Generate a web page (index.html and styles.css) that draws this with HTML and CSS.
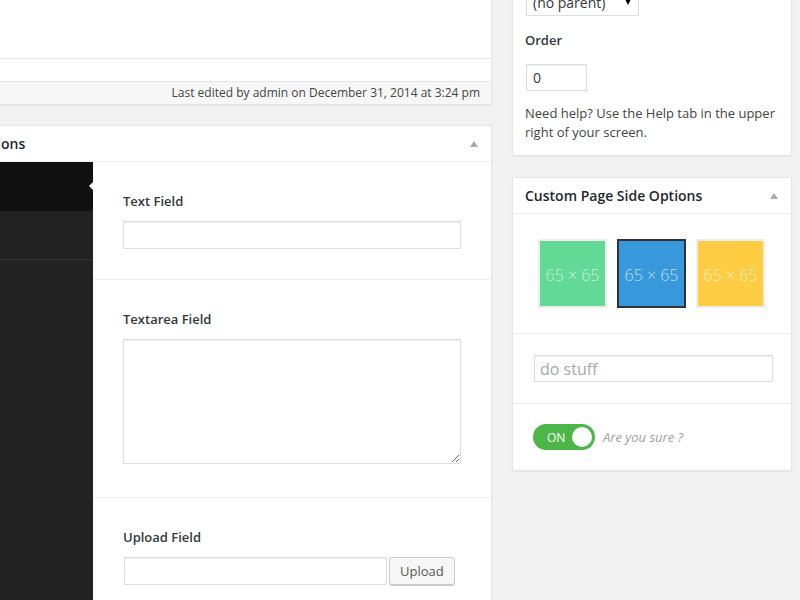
FILE: index.html
```html
<!DOCTYPE html>
<html lang="en">
<head>
<meta charset="utf-8">
<title>Edit Page</title>
<link rel="stylesheet" href="styles.css">
</head>
<body>
<div class="page">
  <div class="main">
    <div class="box editor">
      <div class="editor-area"></div>
      <div class="editor-strip"></div>
      <div class="status">Last edited by admin on December 31, 2014 at 3:24 pm</div>
    </div>

    <div class="box postbox">
      <div class="hndle">
        <span>Custom Page Options</span>
        <span class="toggle-arrow"></span>
      </div>
      <div class="opts">
        <div class="nav">
          <div class="nav-item active">General</div>
          <div class="nav-item">Media</div>
        </div>
        <div class="content">
          <div class="field">
            <label class="label">Text Field</label>
            <input class="input" type="text">
          </div>
          <div class="field field-textarea">
            <label class="label">Textarea Field</label>
            <textarea class="input textarea"></textarea>
          </div>
          <div class="field">
            <label class="label">Upload Field</label>
            <div class="upload-row">
              <input class="input upload-input" type="text">
              <button class="button" type="button">Upload</button>
            </div>
          </div>
        </div>
      </div>
    </div>
  </div>

  <div class="side">
    <div class="box attrs">
      <div class="select"><span>(no parent)</span><span class="select-arrow"></span></div>
      <p class="attr-label">Order</p>
      <input class="input order" type="text" value="0">
      <p class="help">Need help? Use the Help tab in the upper right of your screen.</p>
    </div>

    <div class="box sidebox">
      <div class="hndle">
        <span>Custom Page Side Options</span>
        <span class="toggle-arrow"></span>
      </div>
      <div class="side-section images">
        <div class="img-opt"><div class="img green">65 × 65</div></div>
        <div class="img-opt selected"><div class="img blue">65 × 65</div></div>
        <div class="img-opt"><div class="img yellow">65 × 65</div></div>
      </div>
      <div class="side-section text-sec">
        <input class="input stuff" type="text" placeholder="do stuff">
      </div>
      <div class="side-section switch-sec">
        <div class="switch"><span class="switch-label">ON</span><span class="knob"></span></div>
        <span class="sure">Are you sure ?</span>
      </div>
    </div>
  </div>
</div>
</body>
</html>
```

FILE: styles.css
```css
html, body {
  margin: 0;
  padding: 0;
}
body {
  background: #f1f1f1;
  font-family: "Open Sans", "Liberation Sans", sans-serif;
  font-size: 13px;
  color: #444;
  overflow: hidden;
  height: 600px;
}
.page {
  display: flex;
  align-items: flex-start;
}
.main {
  flex: none;
  width: 625px;
  margin-left: -133px;
}
.side {
  flex: none;
  width: 280px;
  margin-left: 20px;
  margin-top: -24px;
}
.box {
  background: #fff;
  border: 1px solid #e5e5e5;
  box-shadow: 0 1px 1px rgba(0, 0, 0, 0.04);
  box-sizing: border-box;
}

/* editor */
.editor {
  margin-top: -1px;
}
.editor-area {
  height: 58px;
  border-bottom: 1px solid #e5e5e5;
}
.editor-strip {
  height: 22px;
  border-bottom: 1px solid #e5e5e5;
}
.status {
  height: 22px;
  line-height: 22px;
  background: #f7f7f7;
  display: flex;
  justify-content: flex-end;
  padding-right: 11px;
  font-size: 12px;
  color: #444;
}

/* postbox */
.postbox {
  margin-top: 20px;
}
.hndle {
  display: flex;
  justify-content: space-between;
  align-items: center;
  padding: 8px 13px 8px 12px;
  border-bottom: 1px solid #eee;
  font-size: 14px;
  font-weight: 600;
  line-height: 19px;
  color: #23282d;
}
.toggle-arrow {
  width: 0;
  height: 0;
  border-left: 4.5px solid transparent;
  border-right: 4.5px solid transparent;
  border-bottom: 6px solid #aaa;
}
.opts {
  display: flex;
}
.nav {
  flex: none;
  width: 225px;
  background: #222;
}
.nav-item {
  position: relative;
  height: 48px;
  line-height: 48px;
  padding-left: 15px;
  color: #ccc;
  border-bottom: 1px solid #333;
}
.nav-item.active {
  background: #111;
  border-bottom-color: #111;
  color: #fff;
}
.nav-item.active::after {
  content: "";
  position: absolute;
  right: 0;
  top: 20px;
  width: 0;
  height: 0;
  border-top: 4px solid transparent;
  border-bottom: 4px solid transparent;
  border-right: 4px solid #fff;
}
.content {
  flex: 1;
  min-width: 0;
}
.field {
  padding: 30px 30px 30px;
  border-bottom: 1px solid #eee;
}
.field-textarea {
  padding-bottom: 33px;
}
.label {
  display: block;
  font-weight: 600;
  font-size: 13px;
  line-height: 18px;
  margin-bottom: 11px;
  color: #32373c;
}
.input {
  display: block;
  box-sizing: border-box;
  width: 100%;
  height: 28px;
  margin: 0;
  padding: 0 6px;
  border: 1px solid #ddd;
  background: #fff;
  box-shadow: inset 0 1px 2px rgba(0, 0, 0, 0.07);
  font-family: "Open Sans", "Liberation Sans", sans-serif;
  font-size: 14px;
  color: #32373c;
  outline: none;
}
.textarea {
  height: 125px;
  resize: vertical;
}
.upload-row {
  display: flex;
  align-items: center;
  gap: 2px;
}
.upload-input {
  width: 263px;
  flex: none;
  margin-left: 1px;
}
.button {
  height: 28px;
  padding: 0 10px;
  border: 1px solid #ccc;
  border-radius: 3px;
  background: #f7f7f7;
  box-shadow: 0 1px 0 #ccc;
  font-family: "Open Sans", "Liberation Sans", sans-serif;
  font-size: 13px;
  color: #555;
  margin-top: -1px;
}

/* sidebar box 1 */
.attrs {
  padding: 11px 12px 13px;
}
.select {
  display: flex;
  justify-content: space-between;
  align-items: center;
  box-sizing: border-box;
  width: 113px;
  height: 28px;
  margin-left: 1px;
  padding: 0 7px 0 6px;
  border: 1px solid #ddd;
  font-size: 14px;
  color: #32373c;
}
.select-arrow {
  width: 0;
  height: 0;
  border-left: 3.5px solid transparent;
  border-right: 3.5px solid transparent;
  border-top: 6px solid #000;
}
.attr-label {
  margin: 15px 0 14px;
  font-weight: 600;
  line-height: 19px;
  color: #32373c;
}
.order {
  width: 61px;
  height: 27px;
  margin-left: 1px;
}
.help {
  margin: 13px 0 0;
  line-height: 19px;
  color: #444;
}

/* sidebar box 2 */
.sidebox {
  margin-top: 21px;
}
.side-section {
  border-bottom: 1px solid #eee;
}
.side-section:last-child {
  border-bottom: none;
}
.images {
  display: flex;
  gap: 10px;
  padding: 25px;
}
.img-opt {
  border: 2px solid #eee;
}
.img-opt.selected {
  border-color: #333;
}
.img {
  width: 65px;
  height: 65px;
  display: flex;
  align-items: center;
  justify-content: center;
  padding-top: 2px;
  box-sizing: border-box;
  font-family: "Open Sans", "Lato", sans-serif;
  font-weight: 300;
  font-size: 16px;
  color: rgba(255, 255, 255, 0.68);
}
.green { background: #62d994; }
.blue { background: #3799db; }
.yellow { background: #ffcd43; }
.text-sec {
  padding: 21px 18px 21px 21px;
}
.stuff {
  height: 27px;
  padding: 0 5px;
  font-size: 16px;
}
.stuff::placeholder {
  color: #a4a8ad;
}
.switch-sec {
  display: flex;
  align-items: center;
  gap: 8px;
  padding: 20px;
}
.switch {
  display: flex;
  align-items: center;
  justify-content: space-between;
  box-sizing: border-box;
  width: 62px;
  height: 26px;
  padding: 0 3px 0 14px;
  border-radius: 13px;
  background: #4cb648;
}
.switch-label {
  color: #fff;
  font-size: 12px;
}
.knob {
  width: 20px;
  height: 20px;
  border-radius: 50%;
  background: #fff;
}
.sure {
  font-style: italic;
  font-size: 13px;
  color: #a0a0a0;
}
```
